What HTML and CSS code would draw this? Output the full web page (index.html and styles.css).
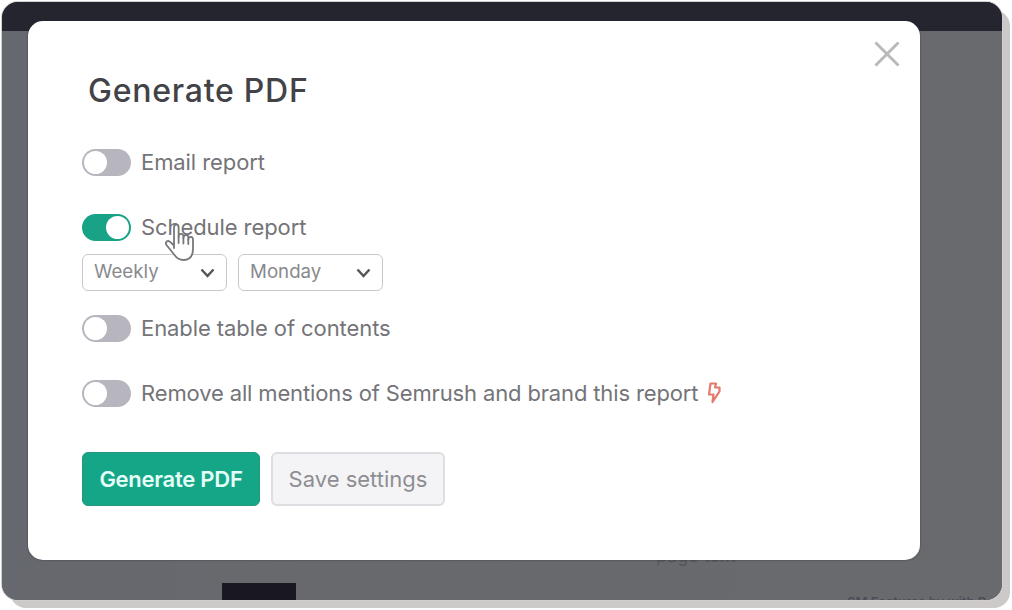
FILE: index.html
```html
<!DOCTYPE html>
<html lang="en">
<head>
    <meta charset="UTF-8">
    <meta name="viewport" content="width=device-width, initial-scale=1.0">
    <title>Generate PDF</title>
    <link rel="stylesheet" href="styles.css">
</head>
<body>
    <div class="frame">
        <!-- Dimmed page behind the dialog -->
        <div class="backdrop" aria-hidden="true">
            <div class="topbar"></div>
            <div class="page-text">page text</div>
            <div class="page-bottom">
                <div class="dark-block"></div>
                <div class="page-note">SM Features by with R</div>
            </div>
        </div>

        <div class="modal" role="dialog" aria-labelledby="title">
            <button class="close" aria-label="Close">
                <svg width="26" height="26" viewBox="0 0 26 26"><path d="M1.5 1.5l23 23M24.5 1.5l-23 23"/></svg>
            </button>

            <h1 id="title">Generate PDF</h1>

            <div class="option option-email">
                <span class="toggle"></span>
                <span class="label">Email report</span>
            </div>

            <div class="option option-schedule">
                <span class="toggle on"></span>
                <span class="label">Schedule report</span>
                <svg class="cursor" width="32" height="41" viewBox="0 0 32 41">
                    <path d="M10 26V5.500Q10 2.500 12.300 2.500T14.600 5.500V15Q14.600 11.800 17 11.800T19.400 14.500V16Q19.600 13 22 13T24.300 15.500V17.500Q24.600 14.800 26.800 14.800T29 18V26.500Q29 38 19.500 38Q14 38 10.500 33L2.500 23Q1 20.800 2.800 19.400Q4.500 18.200 6.700 20.300L10 23.500"/>
                    <path d="M14.600 15v6M19.400 16v5.500M24.300 17.500V22"/>
                </svg>
            </div>

            <div class="selects">
                <div class="select">
                    <span>Weekly</span>
                    <svg width="15" height="10" viewBox="0 0 15 10"><path d="M1.500 1.500l6 6.500 6-6.500"/></svg>
                </div>
                <div class="select">
                    <span>Monday</span>
                    <svg width="15" height="10" viewBox="0 0 15 10"><path d="M1.500 1.500l6 6.500 6-6.500"/></svg>
                </div>
            </div>

            <div class="option option-contents">
                <span class="toggle"></span>
                <span class="label">Enable table of contents</span>
            </div>

            <div class="option option-brand">
                <span class="toggle"></span>
                <span class="label label-brand">Remove all mentions of Semrush and brand this report</span>
                <svg class="bolt" width="14" height="22" viewBox="0 0 14 22"><path d="M3.500 1.500H9L8 5.500H12.500V9.500L5.500 20 6.500 12.500H2z"/></svg>
            </div>

            <div class="actions">
                <button class="btn btn-primary">Generate PDF</button>
                <button class="btn btn-secondary">Save settings</button>
            </div>
        </div>
    </div>
</body>
</html>
```
FILE: styles.css
```css
* {
    margin: 0;
    padding: 0;
    box-sizing: border-box;
}

body {
    font-family: Inter, "Liberation Sans", sans-serif;
    background: #fff;
    padding: 2px;
    height: 610px;
    overflow: hidden;
}

/* Screen with its hard shadow */
.frame {
    display: grid;
    width: 1000px;
    height: 598px;
    border-radius: 16px;
    overflow: hidden;
    background: #68696e;
    box-shadow: 0 0 0 1px #cfd0d0, 8px 8px 0 #cdc9c9;
}

/* Dimmed page */
.backdrop {
    grid-area: 1 / 1;
    display: flex;
    flex-direction: column;
    height: 598px;
    overflow: hidden;
    background: linear-gradient(100deg, #65686f, #68696c 50%, #696a6e);
}

.topbar {
    height: 29px;
    background: #252530;
}

.page-text {
    margin-top: auto;
    padding-left: 654px;
    height: 37px;
    font-size: 18px;
    line-height: 20px;
    color: #55565d;
}

.page-bottom {
    display: flex;
    height: 17px;
}

.dark-block {
    width: 74px;
    height: 17px;
    margin-left: 220px;
    background: #191722;
}

.page-note {
    margin-left: 551px;
    padding-top: 11px;
    font-size: 13px;
    line-height: 16px;
    font-weight: 600;
    white-space: nowrap;
    color: #4b4d58;
}

/* Dialog */
.modal {
    grid-area: 1 / 1;
    position: relative;
    z-index: 1;
    width: 892px;
    height: 539px;
    margin: 19px 0 0 26px;
    padding: 50px 54px 0;
    border-radius: 15px;
    background: #fff;
    box-shadow: 0 0 2px rgba(40, 40, 45, 0.7);
}

.close {
    position: absolute;
    top: 20px;
    right: 20px;
    width: 26px;
    height: 26px;
    border: none;
    background: none;
}

.close svg {
    display: block;
    fill: none;
    stroke: #b9b9bb;
    stroke-width: 3;
}

h1 {
    height: 40px;
    padding-left: 6px;
    font-size: 32px;
    line-height: 40px;
    font-weight: 500;
    letter-spacing: 0.75px;
    color: #424247;
}

.option {
    display: flex;
    align-items: center;
    height: 28px;
    gap: 10px;
}

.option-email {
    margin-top: 37px;
}

.option-schedule {
    position: relative;
    margin-top: 37px;
}

.option-contents {
    margin-top: 23px;
}

.option-brand {
    margin-top: 37px;
}

.toggle {
    display: flex;
    flex: none;
    width: 49px;
    height: 27px;
    padding: 2px;
    border-radius: 14px;
    background: #b7b5be;
}

.toggle::after {
    content: "";
    width: 23px;
    height: 23px;
    border-radius: 50%;
    background: #fff;
}

.toggle.on {
    justify-content: flex-end;
    background: #18a386;
}

.label {
    font-size: 22px;
    line-height: 28px;
    letter-spacing: -0.08px;
    white-space: nowrap;
    color: #747478;
}

.label-brand {
    letter-spacing: -0.14px;
}

/* Pointer over the schedule label */
.cursor {
    position: absolute;
    left: 82px;
    top: 9px;
    fill: #fff;
    stroke: #77777c;
    stroke-width: 1.8;
    stroke-linejoin: round;
    stroke-linecap: round;
}

.selects {
    display: flex;
    gap: 12px;
    margin-top: 13px;
}

.select {
    display: flex;
    align-items: center;
    justify-content: space-between;
    width: 145px;
    height: 37px;
    padding: 0 11px;
    border: 1.5px solid #c9c9cd;
    border-radius: 6px;
    font-size: 18.7px;
    line-height: 24px;
    color: #89898d;
}

.select + .select {
    margin-left: -1px;
}

.select span {
    margin-top: -2px;
}

.select svg {
    fill: none;
    stroke: #55555a;
    stroke-width: 2.5;
}

.bolt {
    margin-left: -1px;
    fill: none;
    stroke: #e5796b;
    stroke-width: 2.2;
    stroke-linejoin: round;
}

.actions {
    display: flex;
    gap: 11px;
    margin-top: 45px;
}

.btn {
    height: 54px;
    border-radius: 6px;
    font-family: inherit;
    font-size: 22px;
    line-height: 28px;
    white-space: nowrap;
}

.btn-primary {
    width: 178px;
    border: 1px solid #25977f;
    background: #15a688;
    color: #e4fff8;
    font-weight: 600;
    letter-spacing: -0.25px;
}

.btn-secondary {
    width: 174px;
    border: 2px solid #dedee2;
    background: #f4f4f6;
    color: #8e8e92;
}
```
